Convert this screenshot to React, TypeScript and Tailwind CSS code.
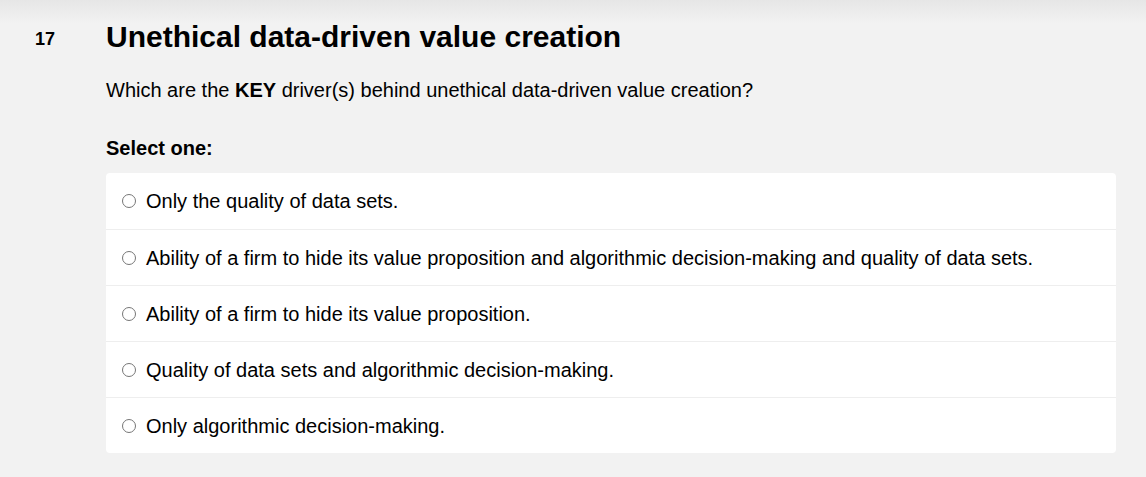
const options = [
  "Only the quality of data sets.",
  "Ability of a firm to hide its value proposition and algorithmic decision-making and quality of data sets.",
  "Ability of a firm to hide its value proposition.",
  "Quality of data sets and algorithmic decision-making.",
  "Only algorithmic decision-making.",
];

export default function App() {
  return (
    <div
      className="h-[477px] w-full bg-[#f2f2f2] bg-gradient-to-b from-[#e6e6e6] to-[#f2f2f2] bg-[length:100%_24px] bg-no-repeat text-black"
      style={{ fontFamily: '"Liberation Sans", Arial, sans-serif' }}
    >
      <div className="flex pl-[35px] pt-[19px]">
        <div className="w-[71px] shrink-0 pt-[6px] text-[18px] font-bold leading-[28px]">17</div>
        <div className="w-[1010px]">
          <h1 className="text-[30px] font-bold leading-[36px]">Unethical data-driven value creation</h1>
          <p className="mt-[21px] text-[20px] leading-[28px]">
            Which are the <b>KEY</b> driver(s) behind unethical data-driven value creation?
          </p>
          <div className="mt-[30px] text-[20px] font-bold leading-[28px]">Select one:</div>
          <div className="mt-[11px] overflow-hidden rounded-[4px] bg-white">
            {options.map((o, i) => (
              <label
                key={i}
                className={`flex h-[56px] items-center pl-[16px] text-[20px] ${i > 0 ? "border-t border-[#eeeeee]" : ""}`}
              >
                <span className="mr-[10px] h-[14px] w-[14px] shrink-0 rounded-full border border-[#767676] bg-white" />
                <span>{o}</span>
              </label>
            ))}
          </div>
        </div>
      </div>
    </div>
  );
}
